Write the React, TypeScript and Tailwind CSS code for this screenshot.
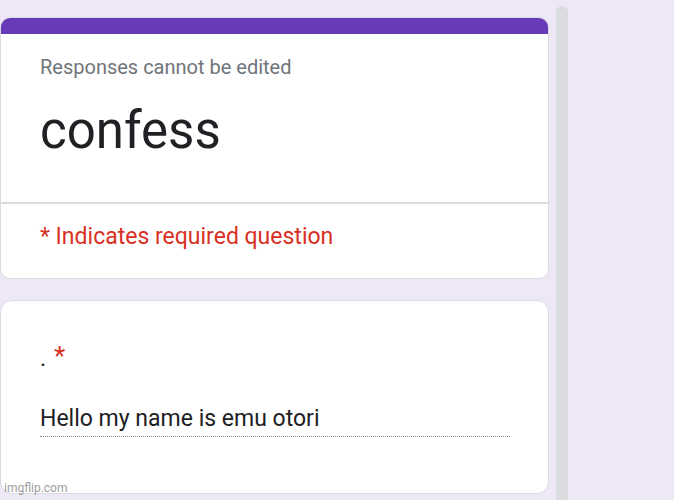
export default function App() {
  return (
    <div
      className="relative flex h-[500px] w-[674px] overflow-hidden bg-[#ede7f6]"
      style={{ fontFamily: "Roboto, 'Liberation Sans', sans-serif" }}
    >
      <div className="flex w-[549px] flex-col gap-[21px] pt-[17px]">
        <div className="overflow-hidden rounded-[10px] border border-[#dadce0] bg-white">
          <div className="h-[16px] bg-[#673ab7]" />
          <div className="px-[39px] pb-[41px] pt-[20px]">
            <p className="text-[20px] leading-[26px] text-[#70757a]">Responses cannot be edited</p>
            <h1 className="mt-[21px] text-[51px] leading-[60px] text-[#202124]">confess</h1>
          </div>
          <div className="border-t-2 border-[#dadce0] px-[39px] pb-[26px] pt-[18px]">
            <p className="text-[23px] leading-[30px] text-[#d93025]">* Indicates required question</p>
          </div>
        </div>

        <div className="h-[194px] rounded-[12px] border border-[#dadce0] bg-white px-[39px] pt-[43px]">
          <p className="flex items-start gap-[8px] text-[23px] leading-[30px] text-[#202124]">
            <span>.</span>
            <span className="-mt-[3px] text-[26px] text-[#d93025]">*</span>
          </p>
          <div className="mt-[30px] w-[470px] border-b border-dotted border-[#80868b] pb-[2px]">
            <span className="text-[23px] leading-[30px] text-[#202124]">Hello my name is emu otori</span>
          </div>
        </div>
      </div>

      <div className="ml-[7px] mt-[6px] w-[12px] rounded-t-full bg-[#dadce0]" />

      <span className="absolute bottom-[3px] left-[4px] text-[12px] text-[#9e9e9e]">imgflip.com</span>
    </div>
  )
}
